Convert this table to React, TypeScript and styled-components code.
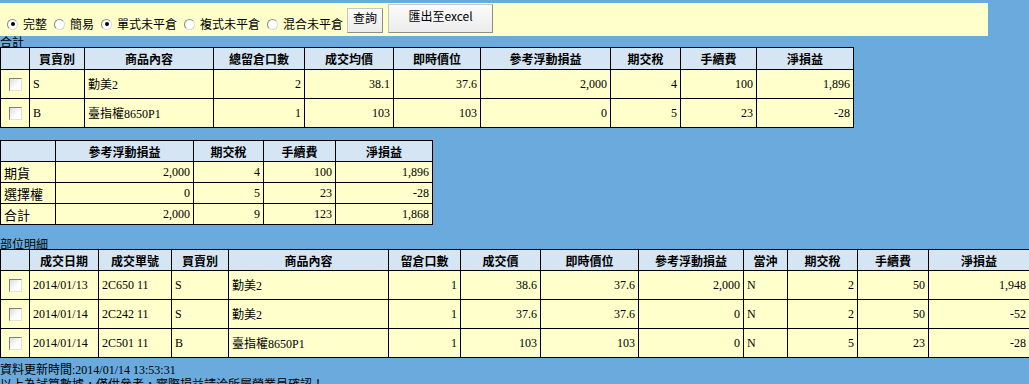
import styled, { createGlobalStyle } from "styled-components";

const GlobalStyle = createGlobalStyle`
  html, body {
    margin: 0;
    padding: 0;
    overflow: hidden;
  }
  body {
    background: #6aaadc;
    font-family: "Noto Sans CJK TC", sans-serif;
    font-size: 12px;
    color: #000;
  }
`;

type Cell = { v: string; a?: "l" | "r" | "c"; sans?: boolean };

const summaryCols = [29, 55, 129, 91, 89, 87, 130, 70, 76, 97];
const summaryHead = ["", "買賣別", "商品內容", "總留倉口數", "成交均價", "即時價位", "參考浮動損益", "期交稅", "手續費", "淨損益"];
const summaryRows: Cell[][] = [
  [{ v: "S" }, { v: "勤美2" }, { v: "2", a: "r" }, { v: "38.1", a: "r" }, { v: "37.6", a: "r" }, { v: "2,000", a: "r" }, { v: "4", a: "r" }, { v: "100", a: "r" }, { v: "1,896", a: "r" }],
  [{ v: "B" }, { v: "臺指權8650P1" }, { v: "1", a: "r" }, { v: "103", a: "r" }, { v: "103", a: "r" }, { v: "0", a: "r" }, { v: "5", a: "r" }, { v: "23", a: "r" }, { v: "-28", a: "r" }],
];

const totalCols = [55, 138, 70, 72, 97];
const totalHead = ["", "參考浮動損益", "期交稅", "手續費", "淨損益"];
const totalRows: Cell[][] = [
  [{ v: "期貨", sans: true }, { v: "2,000", a: "r" }, { v: "4", a: "r" }, { v: "100", a: "r" }, { v: "1,896", a: "r" }],
  [{ v: "選擇權", sans: true }, { v: "0", a: "r" }, { v: "5", a: "r" }, { v: "23", a: "r" }, { v: "-28", a: "r" }],
  [{ v: "合計", sans: true }, { v: "2,000", a: "r" }, { v: "9", a: "r" }, { v: "123", a: "r" }, { v: "1,868", a: "r" }],
];

const detailCols = [29, 69, 73, 57, 160, 72, 80, 98, 105, 44, 70, 71, 101];
const detailHead = ["", "成交日期", "成交單號", "買賣別", "商品內容", "留倉口數", "成交價", "即時價位", "參考浮動損益", "當沖", "期交稅", "手續費", "淨損益"];
const detailRows: Cell[][] = [
  [{ v: "2014/01/13" }, { v: "2C650 11" }, { v: "S" }, { v: "勤美2" }, { v: "1", a: "r" }, { v: "38.6", a: "r" }, { v: "37.6", a: "r" }, { v: "2,000", a: "r" }, { v: "N" }, { v: "2", a: "r" }, { v: "50", a: "r" }, { v: "1,948", a: "r" }],
  [{ v: "2014/01/14" }, { v: "2C242 11" }, { v: "S" }, { v: "勤美2" }, { v: "1", a: "r" }, { v: "37.6", a: "r" }, { v: "37.6", a: "r" }, { v: "0", a: "r" }, { v: "N" }, { v: "2", a: "r" }, { v: "50", a: "r" }, { v: "-52", a: "r" }],
  [{ v: "2014/01/14" }, { v: "2C501 11" }, { v: "B" }, { v: "臺指權8650P1" }, { v: "1", a: "r" }, { v: "103", a: "r" }, { v: "103", a: "r" }, { v: "0", a: "r" }, { v: "N" }, { v: "5", a: "r" }, { v: "23", a: "r" }, { v: "-28", a: "r" }],
];

const modes = [
  { label: "完整", on: true },
  { label: "簡易", on: false },
  { label: "單式未平倉", on: true },
  { label: "複式未平倉", on: false },
  { label: "混合未平倉", on: false },
];

const App = () => {
  return (
    <Page>
      <GlobalStyle />
      <Toolbar>
        {modes.map((m) => (
          <RadioItem key={m.label}>
            <Radio $on={m.on} />
            <span>{m.label}</span>
          </RadioItem>
        ))}
        <Button $h={25} $w={36}>查詢</Button>
        <Button $h={29} $w={105}>匯出至excel</Button>
      </Toolbar>

      <SectionLabel>合計</SectionLabel>
      <Grid $w={853}>
        <colgroup>
          {summaryCols.map((w, i) => <col key={i} style={{ width: w }} />)}
        </colgroup>
        <thead>
          <tr>{summaryHead.map((h, i) => <Th key={i} $h={21}>{h}</Th>)}</tr>
        </thead>
        <tbody>
          {summaryRows.map((r, i) => (
            <tr key={i}>
              <Td $h={28} $align="c"><Check /></Td>
              {r.map((c, j) => <Td key={j} $h={28} $align={c.a ?? "l"}>{c.v}</Td>)}
            </tr>
          ))}
        </tbody>
      </Grid>

      <TotalGrid $w={432}>
        <colgroup>
          {totalCols.map((w, i) => <col key={i} style={{ width: w }} />)}
        </colgroup>
        <thead>
          <tr>{totalHead.map((h, i) => <Th key={i} $h={20}>{h}</Th>)}</tr>
        </thead>
        <tbody>
          {totalRows.map((r, i) => (
            <tr key={i}>
              {r.map((c, j) => <Td key={j} $h={20} $align={c.a ?? "l"} $sans={c.sans}>{c.v}</Td>)}
            </tr>
          ))}
        </tbody>
      </TotalGrid>

      <DetailLabel>部位明細</DetailLabel>
      <Grid $w={1029}>
        <colgroup>
          {detailCols.map((w, i) => <col key={i} style={{ width: w }} />)}
        </colgroup>
        <thead>
          <tr>{detailHead.map((h, i) => <Th key={i} $h={20}>{h}</Th>)}</tr>
        </thead>
        <tbody>
          {detailRows.map((r, i) => (
            <tr key={i}>
              <Td $h={28} $align="c"><Check /></Td>
              {r.map((c, j) => <Td key={j} $h={28} $align={c.a ?? "l"}>{c.v}</Td>)}
            </tr>
          ))}
        </tbody>
      </Grid>

      <Footer>
        <div>資料更新時間<Num>:2014/01/14 13:53:31</Num></div>
        <div>以上為試算數據，僅供參考，實際損益請洽所屬營業員確認！</div>
      </Footer>
    </Page>
  );
};

const Page = styled.div`
  padding-top: 3px;
`;

const Toolbar = styled.div`
  display: flex;
  align-items: center;
  width: 981px;
  height: 33px;
  padding-left: 7px;
  background: #ffffcc;
`;

const RadioItem = styled.label`
  display: flex;
  align-items: center;
  align-self: flex-end;
  gap: 5px;
  margin: 0 7px 5px 0;
  font-size: 12px;
  line-height: 14px;
`;

const Radio = styled.span<{ $on: boolean }>`
  position: relative;
  box-sizing: border-box;
  width: 11px;
  height: 11px;
  border-radius: 50%;
  background: #fff;
  border: 1px solid #8a8a8a;
  border-right-color: #d8d8d8;
  border-bottom-color: #d8d8d8;
  &::after {
    content: "";
    display: ${(p) => (p.$on ? "block" : "none")};
    position: absolute;
    left: 2.5px;
    top: 2.5px;
    width: 4px;
    height: 4px;
    border-radius: 50%;
    background: #000;
  }
`;

const Button = styled.button<{ $h: number; $w: number }>`
  box-sizing: border-box;
  width: ${(p) => p.$w}px;
  height: ${(p) => p.$h}px;
  align-self: flex-end;
  margin: 0 5px 3px 0;
  padding: 0 0 6px;
  font-family: "Noto Sans CJK TC", sans-serif;
  font-size: 12px;
  line-height: 14px;
  color: #000;
  background: linear-gradient(#fbfbfb, #ececec);
  border: 1px solid #c6c6c6;
  border-right-color: #8e8e8e;
  border-bottom-color: #8e8e8e;
  &:first-of-type {
    margin-left: -3px;
  }
`;

const SectionLabel = styled.div`
  height: 11px;
  line-height: 11px;
  font-size: 12px;
`;

const DetailLabel = styled(SectionLabel)`
  margin-top: 12px;
  height: 12px;
  line-height: 13px;
`;

const Grid = styled.table<{ $w: number }>`
  width: ${(p) => p.$w}px;
  table-layout: fixed;
  border-collapse: collapse;
  background: #ffffcc;
`;

const TotalGrid = styled(Grid)`
  margin-top: 12px;
`;

const Th = styled.th<{ $h: number }>`
  height: ${(p) => p.$h}px;
  padding: 0;
  border: 1px solid #000;
  background: #d5e5f4;
  font-family: "Noto Sans CJK TC", sans-serif;
  font-size: 12px;
  font-weight: bold;
  text-align: center;
  white-space: nowrap;
  overflow: hidden;
`;

const Td = styled.td<{ $h: number; $align: "l" | "r" | "c"; $sans?: boolean }>`
  height: ${(p) => p.$h}px;
  padding: 0 3px;
  border: 1px solid #000;
  font-family: ${(p) =>
    p.$sans ? `"Noto Sans CJK TC", sans-serif` : `"Liberation Serif", "Noto Sans CJK TC", serif`};
  font-size: ${(p) => (p.$sans ? 13 : 12)}px;
  text-align: ${(p) => (p.$align === "r" ? "right" : p.$align === "c" ? "center" : "left")};
  white-space: nowrap;
  overflow: hidden;
`;

const Check = styled.span`
  display: inline-block;
  box-sizing: border-box;
  width: 13px;
  height: 13px;
  vertical-align: middle;
  background: linear-gradient(135deg, #dcdcdc, #ffffff 60%);
  border: 1px solid #7f7f7f;
  border-right-color: #e0e0e0;
  border-bottom-color: #e0e0e0;
`;

const Footer = styled.div`
  margin-top: 4px;
  font-size: 12px;
  line-height: 14px;
`;

const Num = styled.span`
  font-family: "Liberation Serif", serif;
`;

export default App;
